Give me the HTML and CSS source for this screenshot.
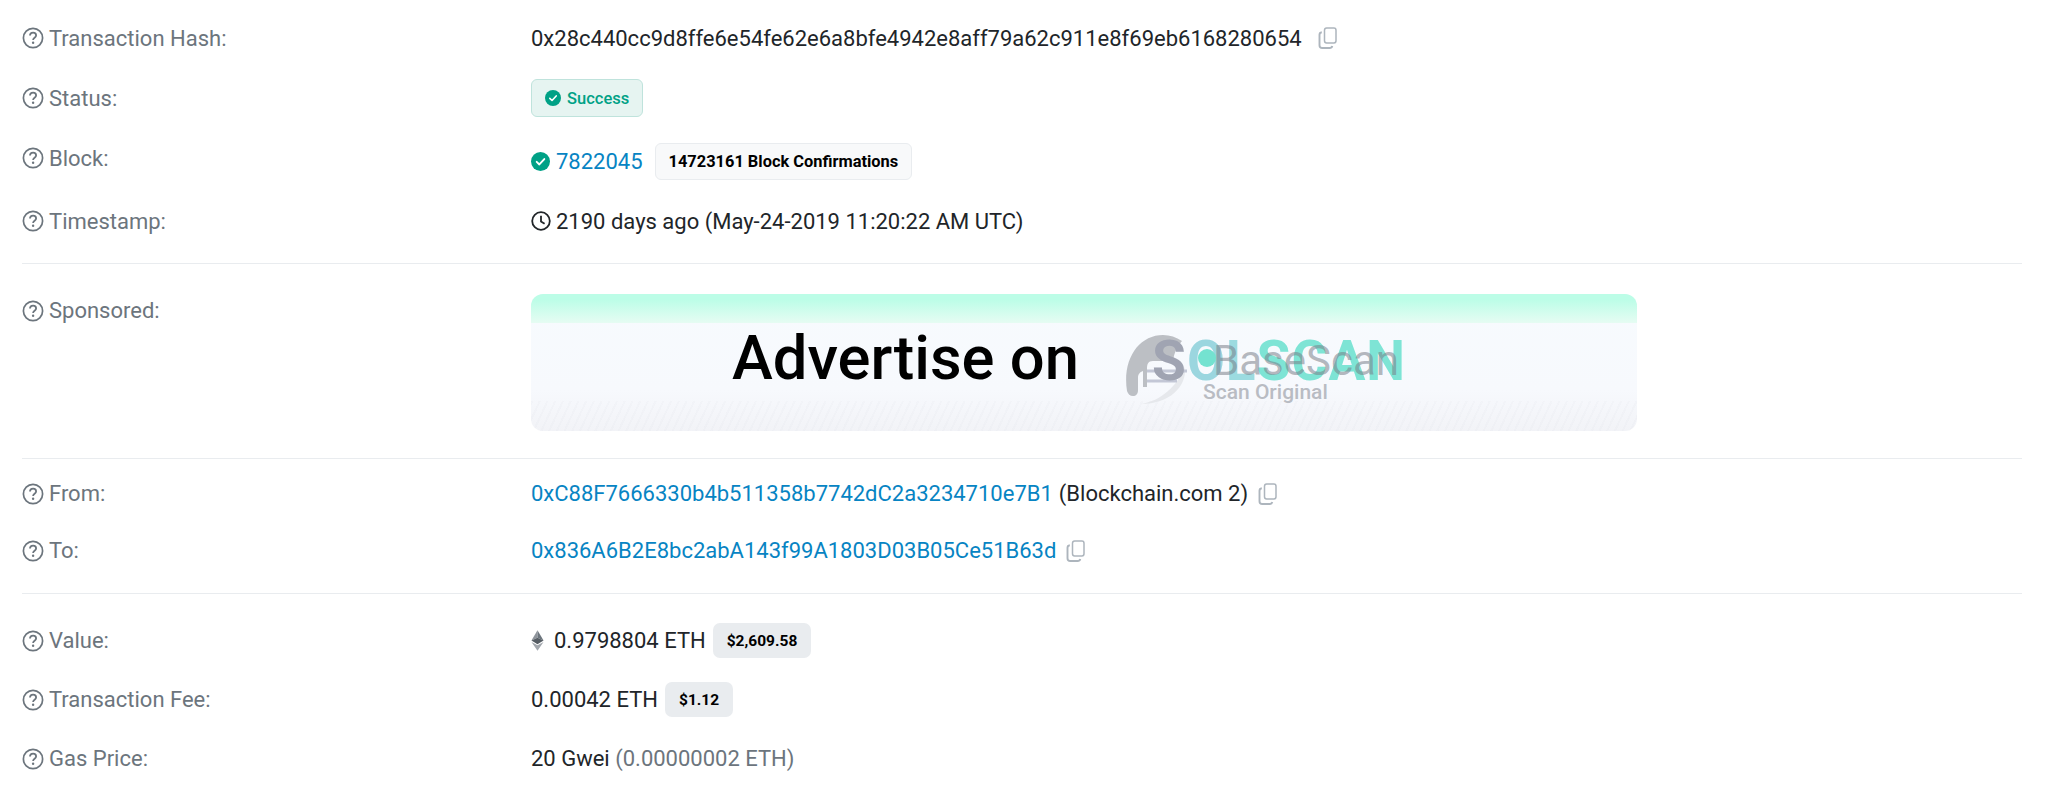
FILE: index.html
```html
<!DOCTYPE html>
<html lang="en">
  <head>
    <meta charset="UTF-8" />
    <title>Transaction Details</title>
    <link rel="stylesheet" href="styles.css">
  </head>
  <body>
    <svg class="sprites" width="0" height="0">
      <symbol id="help" viewBox="0 0 22 22">
        <circle cx="11" cy="11" r="9.6" fill="none" stroke="currentColor" stroke-width="1.7" />
        <path d="M8 8.6c0-1.8 1.4-2.9 3.1-2.9s3 1.1 3 2.7c0 2.3-3 2.4-3 4.5" fill="none" stroke="currentColor" stroke-width="1.8" />
        <circle cx="11.1" cy="15.8" r="1.2" fill="currentColor" />
      </symbol>
      <symbol id="copy" viewBox="0 0 20 22">
        <path d="M6.5 3.2c0-1.2.9-2.2 2.1-2.2h7.3c1.2 0 2.1 1 2.1 2.2v10.6c0 1.2-.9 2.2-2.1 2.2H8.6c-1.2 0-2.1-1-2.1-2.2z" fill="none" stroke="currentColor" stroke-width="1.5" />
        <path d="M3.8 5.2C2.4 5.4 1.5 6.4 1.5 7.8v10.4c0 1.6 1.2 2.8 2.8 2.8h7.4c1.3 0 2.3-.8 2.6-2" fill="none" stroke="currentColor" stroke-width="1.9" />
      </symbol>
      <symbol id="check" viewBox="0 0 20 20">
        <circle cx="10" cy="10" r="10" fill="currentColor" />
        <path d="M6 10.4l2.8 2.7L14 7.4" fill="none" stroke="#fff" stroke-width="2" stroke-linecap="round" stroke-linejoin="round" />
      </symbol>
    </svg>

    <div class="section">
      <div class="row">
        <div class="label"><svg class="help"><use href="#help" /></svg>Transaction Hash:</div>
        <div class="value">
          <span>0x28c440cc9d8ffe6e54fe62e6a8bfe4942e8aff79a62c911e8f69eb6168280654</span>
          <svg class="copy copy-hash"><use href="#copy" /></svg>
        </div>
      </div>
      <div class="row">
        <div class="label"><svg class="help"><use href="#help" /></svg>Status:</div>
        <div class="value">
          <span class="status"><svg class="status-icon"><use href="#check" /></svg>Success</span>
        </div>
      </div>
      <div class="row">
        <div class="label"><svg class="help"><use href="#help" /></svg>Block:</div>
        <div class="value value-low">
          <svg class="block-icon"><use href="#check" /></svg>
          <a class="link" href="#">7822045</a>
          <span class="confirmations">14723161 Block Confirmations</span>
        </div>
      </div>
      <div class="row row-time">
        <div class="label"><svg class="help"><use href="#help" /></svg>Timestamp:</div>
        <div class="value">
          <svg class="clock" viewBox="0 0 20 20">
            <circle cx="10" cy="10" r="8.8" fill="none" stroke="currentColor" stroke-width="1.8" />
            <path d="M10 4.8V10.4l3.6 2.4" fill="none" stroke="currentColor" stroke-width="1.8" />
          </svg>
          <span>2190 days ago (May-24-2019 11:20:22 AM UTC)</span>
        </div>
      </div>
    </div>

    <div class="section section-ad">
      <div class="row row-ad">
        <div class="label"><svg class="help"><use href="#help" /></svg>Sponsored:</div>
        <div class="ad">
          <div class="ad-band"></div>
          <div class="ad-hatch"></div>
          <span class="ad-title">Advertise on</span>
          <div class="ad-logo">
            <svg class="ad-elephant" viewBox="0 0 66 70">
              <path d="M2 56C-3 24 14 0 38 0c7 0 13 2 19 6-5 6-8 12-9 20H28c-5 0-6 3-6 8v18h-4V36c-3 1-5 3-5 7v12c0 4-2 6-5 6-3 0-5-2-6-5z" fill="#bcbfc4" />
              <path d="M60 32c2 20-16 37-44 37 20-3 36-18 44-37z" fill="#e6e8ec" />
              <path d="M22 36h40M22 46h30" stroke="#c3c7d6" stroke-width="3" fill="none" />
            </svg>
            <span class="logo-sol"><span class="logo-s">S</span><span class="logo-o">O</span><span class="logo-l">L</span>SCAN</span>
            <span class="logo-dot"></span>
            <span class="logo-base">BaseScan</span>
            <span class="logo-sub">Scan Original</span>
          </div>
        </div>
      </div>
    </div>

    <div class="section section-address">
      <div class="row row-address">
        <div class="label"><svg class="help"><use href="#help" /></svg>From:</div>
        <div class="value">
          <a class="link" href="#">0xC88F7666330b4b511358b7742dC2a3234710e7B1</a>
          <span class="name">(Blockchain.com 2)</span>
          <svg class="copy"><use href="#copy" /></svg>
        </div>
      </div>
      <div class="row row-address">
        <div class="label"><svg class="help"><use href="#help" /></svg>To:</div>
        <div class="value">
          <a class="link" href="#">0x836A6B2E8bc2abA143f99A1803D03B05Ce51B63d</a>
          <svg class="copy"><use href="#copy" /></svg>
        </div>
      </div>
    </div>

    <div class="section section-last">
      <div class="row row-fee">
        <div class="label"><svg class="help"><use href="#help" /></svg>Value:</div>
        <div class="value">
          <svg class="eth" viewBox="0 0 14 22">
            <path d="M7 0L.5 11 7 8z" fill="#8e949b" />
            <path d="M7 0l6.500 11L7 8z" fill="#6c757d" />
            <path d="M.5 11L7 8l6.500 3L7 15z" fill="#565d64" />
            <path d="M.5 12.500L7 16.200l6.500-3.700L7 22z" fill="#a2a7ad" />
          </svg>
          <span>0.9798804 ETH</span>
          <span class="price">$2,609.58</span>
        </div>
      </div>
      <div class="row row-fee">
        <div class="label"><svg class="help"><use href="#help" /></svg>Transaction Fee:</div>
        <div class="value">
          <span>0.00042 ETH</span>
          <span class="price">$1.12</span>
        </div>
      </div>
      <div class="row row-fee">
        <div class="label"><svg class="help"><use href="#help" /></svg>Gas Price:</div>
        <div class="value">
          <span>20 Gwei <span class="muted">(0.00000002 ETH)</span></span>
        </div>
      </div>
    </div>
  </body>
</html>
```

FILE: styles.css
```css
* {
  margin: 0;
  padding: 0;
  box-sizing: border-box;
  font-family: "Roboto", "Liberation Sans", sans-serif;
}
html,
body {
  height: 799px;
  overflow: hidden;
}
body {
  background: #fff;
  color: #212529;
  font-size: 22px;
  padding: 8px 22px 0 22px;
}
.sprites {
  display: block;
  height: 0;
}

.section {
  margin-right: 4px;
  border-bottom: 1px solid #e9ecef;
}
.section-ad {
  padding-top: 30px;
  padding-bottom: 27px;
}
.section-address {
  padding-top: 6px;
  padding-bottom: 14px;
}
.section-last {
  border-bottom: none;
  padding-top: 17px;
}

.row {
  display: grid;
  grid-template-columns: 509px 1fr;
  align-items: center;
  height: 60px;
}
.row-time {
  margin-top: 3px;
  margin-bottom: 12px;
}
.row-ad {
  height: auto;
  align-items: start;
}
.row-address {
  height: 57px;
}
.row-fee {
  height: 59px;
}

.label {
  display: flex;
  align-items: center;
  gap: 5px;
  color: #6c757d;
}
.help {
  width: 22px;
  height: 22px;
  color: #6c757d;
  flex: none;
}
.row-ad .label {
  margin-top: 4px;
}

.value {
  display: flex;
  align-items: center;
}
.value-low {
  padding-top: 6px;
}
.link {
  color: #0784c3;
  text-decoration: none;
}
.muted {
  color: #6c757d;
}
.name {
  margin-left: 6px;
}

.copy {
  width: 20px;
  height: 22px;
  margin-left: 10px;
  color: #adb5bd;
  flex: none;
}
.copy-hash {
  margin-left: 16px;
}

.status {
  display: flex;
  align-items: center;
  height: 38px;
  padding: 0 13px;
  background: #e6f4f1;
  border: 1px solid #bfe3dc;
  border-radius: 6px;
  color: #00a186;
  font-size: 16.5px;
  font-weight: 500;
}
.status-icon {
  width: 16px;
  height: 16px;
  margin-right: 6px;
  color: #00a186;
}
.block-icon {
  width: 19px;
  height: 19px;
  margin-right: 6px;
  color: #00a186;
  flex: none;
}
.confirmations {
  display: flex;
  align-items: center;
  height: 37px;
  margin-left: 12px;
  padding: 0 13px;
  background: #f8f9fa;
  border: 1px solid #e9ecef;
  border-radius: 6px;
  color: #000;
  font-size: 16.4px;
  font-weight: 700;
}
.clock {
  width: 20px;
  height: 20px;
  margin-right: 5px;
  flex: none;
}

.ad {
  position: relative;
  width: 1106px;
  height: 137px;
  overflow: hidden;
  border-radius: 12px;
  background: linear-gradient(#f7fbfe, #f7f9fd 70%, #f2f3f7);
}
.ad-band {
  height: 29px;
  background: linear-gradient(#bcfde7 20%, #e6fcf3);
}
.ad-hatch {
  position: absolute;
  left: 0;
  right: 0;
  bottom: 0;
  height: 30px;
  background: repeating-linear-gradient(115deg, rgba(200, 204, 214, 0.08) 0 2px, transparent 2px 7px);
}
.ad-title {
  position: absolute;
  left: 201px;
  top: 29px;
  font-size: 61.5px;
  font-weight: 500;
  line-height: 70px;
  color: #000;
  white-space: nowrap;
}
.ad-logo {
  position: absolute;
  left: 594px;
  top: 41px;
  width: 290px;
  height: 70px;
}
.ad-elephant {
  position: absolute;
  left: 0;
  top: 0;
  width: 66px;
  height: 70px;
}
.logo-sol {
  position: absolute;
  left: 27px;
  top: -7px;
  font-size: 55px;
  font-weight: 700;
  line-height: 66px;
  letter-spacing: 1px;
  color: #7ee4d5;
  white-space: nowrap;
}
.logo-s {
  color: #a0a4b2;
  font-weight: 700;
}
.logo-o {
  color: #9bd6df;
  font-weight: 700;
}
.logo-l {
  color: #9cdbe0;
  font-weight: 700;
}
.logo-dot {
  position: absolute;
  left: 73px;
  top: 14px;
  width: 18px;
  height: 18px;
  border-radius: 50%;
  background: #74e2d0;
}
.logo-base {
  position: absolute;
  left: 88px;
  top: 3px;
  font-size: 42px;
  line-height: 46px;
  color: rgba(120, 125, 135, 0.55);
  white-space: nowrap;
}
.logo-sub {
  position: absolute;
  left: 78px;
  top: 44px;
  font-size: 21px;
  font-weight: 500;
  line-height: 26px;
  color: #b9bcc3;
  white-space: nowrap;
}

.eth {
  width: 13px;
  height: 21px;
  margin-right: 10px;
  flex: none;
}
.price {
  display: flex;
  align-items: center;
  height: 35px;
  margin-left: 7px;
  padding: 0 14px;
  background: #e9ecef;
  border-radius: 7px;
  color: #000;
  font-size: 15.5px;
  font-weight: 700;
}
```
